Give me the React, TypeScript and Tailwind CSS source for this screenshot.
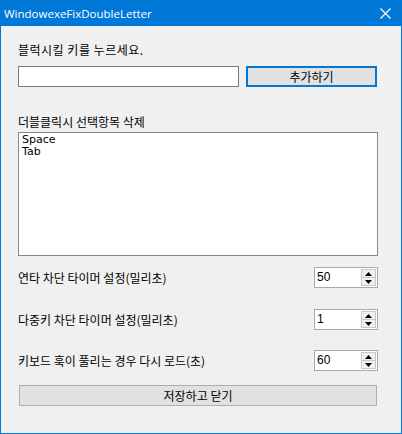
import React from 'react';

const KR = { fontFamily: '"Noto Sans CJK KR", "Noto Sans", sans-serif' };

// numeric up/down like the WinForms control
const Spinner = ({ value }: { value: string }) => (
  <div className="flex h-[21px] w-[64px] border border-[#a9a9a9] bg-white">
    <div className="flex-1 pl-[2px] text-[12px] leading-[18px] text-black" style={{ fontFamily: '"Liberation Sans", sans-serif' }}>
      {value}
    </div>
    <div className="my-[1px] mr-[1px] flex w-[15px] flex-col border border-[#c8c8c8] bg-[#f0f0f0]">
      <div className="flex flex-1 items-center justify-center border-b border-[#c8c8c8]">
        <svg width="7" height="4" viewBox="0 0 7 4"><path d="M3.5 0 L7 4 L0 4 Z" fill="#000" /></svg>
      </div>
      <div className="flex flex-1 items-center justify-center">
        <svg width="7" height="4" viewBox="0 0 7 4"><path d="M0 0 L7 0 L3.5 4 Z" fill="#000" /></svg>
      </div>
    </div>
  </div>
);

const Row = ({ label, value, className }: { label: string; value: string; className: string }) => (
  <div className={`flex h-[21px] w-[360px] items-center justify-between ${className}`}>
    <span className="text-[12px] leading-[16px] text-black" style={KR}>{label}</span>
    <Spinner value={value} />
  </div>
);

export default function App() {
  return (
    <div className="flex h-[434px] w-[402px] flex-col border border-[#0078d7] bg-[#f0f0f0]">
      {/* title bar */}
      <div className="flex h-[25px] items-center justify-between bg-[#0078d7] pl-[3px] pr-[10px]">
        <span className="text-[11.5px] leading-[16px] text-white" style={{ fontFamily: '"Open Sans", "Noto Sans", sans-serif' }}>
          WindowexeFixDoubleLetter
        </span>
        <svg width="11" height="11" viewBox="0 0 11 11">
          <path d="M0.5 0.5 L10.5 10.5 M10.5 0.5 L0.5 10.5" stroke="#fff" strokeWidth="1.2" />
        </svg>
      </div>

      <div className="flex flex-col px-[17px]">
        <div className="mt-[16px] h-[16px] text-[12px] leading-[16px] tracking-[0.5px] text-black" style={KR}>
          블럭시킬 키를 누르세요.
        </div>
        <div className="mt-[8px] flex gap-[7px]">
          <div className="h-[21px] w-[221px] border border-[#7a7a7a] bg-white" />
          <button className="flex h-[21px] w-[131px] items-center justify-center border-2 border-[#0078d7] bg-[#e1e1e1] text-[12px] leading-[16px] text-black" style={KR}>
            추가하기
          </button>
        </div>

        <div className="mt-[27px] h-[16px] text-[12px] leading-[16px] text-black" style={KR}>
          더블클릭시 선택항목 삭제
        </div>
        <div className="mt-[2px] h-[124px] w-[360px] border border-[#828790] bg-white pl-[3px] pt-[1px] text-[11px] leading-[12px] text-black" style={{ fontFamily: '"DejaVu Sans", sans-serif' }}>
          <div className="h-[12px]">Space</div>
          <div className="h-[12px]">Tab</div>
        </div>

        <Row className="mt-[11px]" label="연타 차단 타이머 설정(밀리초)" value="50" />
        <Row className="mt-[21px]" label="다중키 차단 타이머 설정(밀리초)" value="1" />
        <Row className="mt-[20px]" label="키보드 훅이 풀리는 경우 다시 로드(초)" value="60" />

        <button className="ml-[1px] mt-[14px] flex h-[21px] w-[358px] items-center justify-center border border-[#adadad] bg-[#e1e1e1] text-[12px] leading-[16px] text-black" style={KR}>
          저장하고 닫기
        </button>
      </div>
    </div>
  );
}
